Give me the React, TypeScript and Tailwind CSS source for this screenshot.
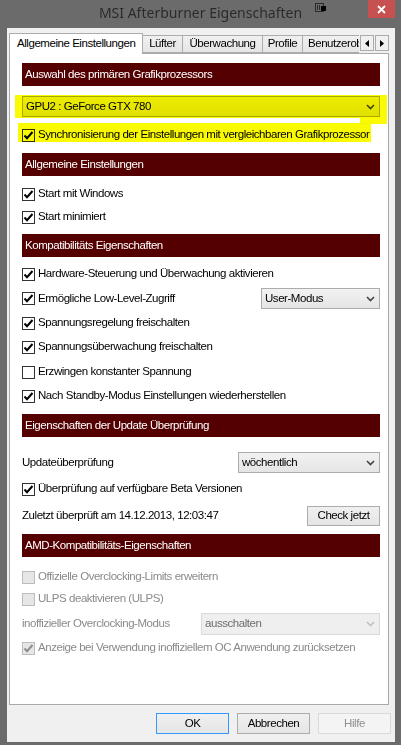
import React from 'react';

const font = "font-['Liberation_Sans',Arial,sans-serif]";

function Check({ checked, disabled }: { checked?: boolean; disabled?: boolean }) {
  return (
    <span
      className={`w-[13px] h-[13px] shrink-0 border flex items-center justify-center ${
        disabled ? 'border-[#bcbcbc] bg-[#e6e6e6]' : 'border-[#333333] bg-white'
      }`}
    >
      {checked && (
        <svg width="11" height="11" viewBox="0 0 11 11">
          <path
            d="M1.5 5.5 L4 8.2 L9.5 2"
            fill="none"
            stroke={disabled ? '#8d8d8d' : '#000'}
            strokeWidth="2"
          />
        </svg>
      )}
    </span>
  );
}

function CheckRow({
  label,
  checked,
  disabled,
  className,
  children,
}: {
  label: string;
  checked?: boolean;
  disabled?: boolean;
  className: string;
  children?: React.ReactNode;
}) {
  return (
    <div className={`flex items-center ${className}`}>
      <Check checked={checked} disabled={disabled} />
      <span className={`ml-[3px] whitespace-nowrap ${disabled ? 'text-[#8a8a8a]' : 'text-black'}`}>{label}</span>
      {children}
    </div>
  );
}

function Chevron({ color = '#444' }: { color?: string }) {
  return (
    <svg width="9" height="6" viewBox="0 0 9 6">
      <path d="M1 1 L4.5 4.5 L8 1" fill="none" stroke={color} strokeWidth="1.6" />
    </svg>
  );
}

function Combo({ text, className, disabled }: { text: string; className: string; disabled?: boolean }) {
  return (
    <div
      className={`flex items-center justify-between border pl-[3px] pr-[4px] ${
        disabled
          ? 'border-[#d9d9d9] bg-[#efefef] text-[#6d6d6d]'
          : 'border-[#acacac] bg-gradient-to-b from-[#f2f2f2] to-[#e5e5e5] text-black'
      } ${className}`}
    >
      <span className="whitespace-nowrap">{text}</span>
      <Chevron color={disabled ? '#c2c2c2' : '#444'} />
    </div>
  );
}

function Header({ title, className }: { title: string; className: string }) {
  return (
    <div className={`h-[23px] bg-[#540000] text-white flex items-center pl-[3px] whitespace-nowrap ${className}`}>
      {title}
    </div>
  );
}

function Button({ label, variant }: { label: string; variant: 'default' | 'normal' | 'disabled' }) {
  const styles = {
    default: 'border-[#3399ff] bg-gradient-to-b from-[#f0f0f0] to-[#e5e5e5] text-black',
    normal: 'border-[#acacac] bg-gradient-to-b from-[#f0f0f0] to-[#e5e5e5] text-black',
    disabled: 'border-[#d9d9d9] bg-[#f4f4f4] text-[#8f8f8f]',
  };
  return (
    <div className={`w-[73px] h-[21px] border flex items-center justify-center ${styles[variant]}`}>{label}</div>
  );
}

export default function App() {
  return (
    <div
      className={`relative w-[401px] h-[745px] bg-[#6b6b6b] flex flex-col overflow-hidden text-[11.5px] tracking-[-0.45px] ${font}`}
    >
      {/* title bar */}
      <div className="h-[28px] shrink-0 grid grid-cols-[1fr_auto_1fr]">
        <div />
        <div className="mt-[3px] leading-[20px] text-[14px] tracking-normal text-[#2b2b2b] font-['Noto_Sans','Liberation_Sans',sans-serif]">
          MSI Afterburner Eigenschaften
        </div>
        <div className="flex justify-end items-start pr-[6px]">
          <svg width="11" height="10" viewBox="0 0 11 10" className="mt-[3px] mr-[42px]">
            <rect x="0.5" y="0.5" width="8" height="8" fill="none" stroke="#2b2b2b" />
            <path d="M2.5 2 V7 M4.5 2 V7" stroke="#2b2b2b" />
            <rect x="6" y="3" width="5" height="5" fill="#000" />
          </svg>
          <div className="w-[27px] h-[18px] bg-[#c75050] flex items-center justify-center">
            <svg width="9" height="9" viewBox="0 0 9 9">
              <path d="M1 1 L8 8 M8 1 L1 8" stroke="#fff" strokeWidth="1.8" />
            </svg>
          </div>
        </div>
      </div>

      {/* dialog body */}
      <div className="flex-1 ml-[7px] mr-[6px] mb-[3px] bg-[#f0f0f0] flex flex-col pl-[2px] pr-[4px]">
        {/* tabs */}
        <div className="mt-[5px] h-[21px] w-[380px] flex items-start relative z-10 -mb-px whitespace-nowrap">
          <div className="w-[134px] h-[21px] bg-white border border-b-0 border-[#acacac] pl-[7px] flex items-center">
            Allgemeine Einstellungen
          </div>
          <div className="flex items-start w-[216px] overflow-hidden">
            <div className="-ml-px shrink-0 w-[41px] h-[18px] mt-[2px] border border-[#acacac] bg-gradient-to-b from-[#f0f0f0] to-[#e5e5e5] flex items-center justify-center">
              Lüfter
            </div>
            <div className="-ml-px shrink-0 w-[81px] h-[18px] mt-[2px] border border-[#acacac] bg-gradient-to-b from-[#f0f0f0] to-[#e5e5e5] flex items-center justify-center">
              Überwachung
            </div>
            <div className="-ml-px shrink-0 w-[41px] h-[18px] mt-[2px] border border-[#acacac] bg-gradient-to-b from-[#f0f0f0] to-[#e5e5e5] flex items-center justify-center">
              Profile
            </div>
            <div className="-ml-px shrink-0 w-[110px] h-[18px] mt-[2px] border border-[#acacac] bg-gradient-to-b from-[#f0f0f0] to-[#e5e5e5] flex items-center pl-[5px]">
              Benutzeroberfläche
            </div>
          </div>
          <div className="flex mt-[2px] ml-px">
            <div className="w-[14px] h-[16px] border border-[#acacac] bg-[#f0f0f0] flex items-center justify-center">
              <svg width="4" height="7" viewBox="0 0 4 7">
                <path d="M4 0 L0 3.5 L4 7 Z" fill="#000" />
              </svg>
            </div>
            <div className="w-[14px] h-[16px] border border-[#acacac] bg-[#f0f0f0] flex items-center justify-center ml-px">
              <svg width="4" height="7" viewBox="0 0 4 7">
                <path d="M0 0 L4 3.5 L0 7 Z" fill="#000" />
              </svg>
            </div>
          </div>
        </div>

        {/* tab panel */}
        <div className="w-[380px] h-[652px] shrink-0 bg-white border border-[#a9a9a9] flex flex-col pl-[12px] pr-[8px]">
          <Header title="Auswahl des primären Grafikprozessors" className="mt-[9px]" />
          <Combo text="GPU2 : GeForce GTX 780" className="mt-[10px] h-[21px]" />
          <CheckRow label="Synchronisierung der Einstellungen mit vergleichbaren Grafikprozessor" checked className="mt-[8px] h-[20px]" />

          <Header title="Allgemeine Einstellungen" className="mt-[8px]" />
          <CheckRow label="Start mit Windows" checked className="mt-[8px] h-[20px]" />
          <CheckRow label="Start minimiert" checked className="mt-[3px] h-[20px]" />

          <Header title="Kompatibilitäts Eigenschaften" className="mt-[7px]" />
          <CheckRow label="Hardware-Steuerung und Überwachung aktivieren" checked className="mt-[7px] h-[20px]" />
          <CheckRow label="Ermögliche Low-Level-Zugriff" checked className="mt-[4px] h-[21px]">
            <Combo text="User-Modus" className="ml-auto w-[119px] h-[21px]" />
          </CheckRow>
          <CheckRow label="Spannungsregelung freischalten" checked className="mt-[4px] h-[20px]" />
          <CheckRow label="Spannungsüberwachung freischalten" checked className="mt-[4px] h-[20px]" />
          <CheckRow label="Erzwingen konstanter Spannung" className="mt-[5px] h-[20px]" />
          <CheckRow label="Nach Standby-Modus Einstellungen wiederherstellen" checked className="mt-[4px] h-[20px]" />

          <Header title="Eigenschaften der Update Überprüfung" className="mt-[8px]" />
          <div className="mt-[15px] h-[21px] flex items-center">
            <span>Updateüberprüfung</span>
            <Combo text="wöchentlich" className="ml-auto w-[142px] h-[21px]" />
          </div>
          <CheckRow label="Überprüfung auf verfügbare Beta Versionen" checked className="mt-[6px] h-[20px]" />
          <div className="mt-[6px] h-[21px] flex items-center">
            <span className="whitespace-nowrap">Zuletzt überprüft am 14.12.2013, 12:03:47</span>
            <div className="ml-auto w-[73px] h-[20px] border border-[#acacac] bg-gradient-to-b from-[#f0f0f0] to-[#e5e5e5] flex items-center justify-center">
              Check jetzt
            </div>
          </div>

          <Header title="AMD-Kompatibilitäts-Eigenschaften" className="mt-[8px]" />
          <CheckRow label="Offizielle Overclocking-Limits erweitern" disabled className="mt-[10px] h-[20px]" />
          <CheckRow label="ULPS deaktivieren (ULPS)" disabled className="mt-[2px] h-[20px]" />
          <div className="mt-[4px] h-[22px] flex items-center">
            <span className="text-[#8a8a8a] whitespace-nowrap">inoffizieller Overclocking-Modus</span>
            <Combo text="ausschalten" disabled className="ml-auto w-[179px] h-[22px]" />
          </div>
          <CheckRow label="Anzeige bei Verwendung inoffiziellem OC Anwendung zurücksetzen" checked disabled className="mt-[3px] h-[20px]" />
        </div>

        {/* dialog buttons */}
        <div className="mt-[8px] flex justify-end gap-[8px]">
          <Button label="OK" variant="default" />
          <Button label="Abbrechen" variant="normal" />
          <Button label="Hilfe" variant="disabled" />
        </div>
      </div>

      {/* yellow marker highlight over the GPU selection */}
      <div className="absolute left-[15px] top-[95px] w-[372px] h-[23px] bg-[#fafa00] mix-blend-multiply pointer-events-none" />
      <div className="absolute left-[360px] top-[118px] w-[27px] h-[6px] bg-[#fafa00] mix-blend-multiply pointer-events-none" />
      <div className="absolute left-[18px] top-[123px] w-[353px] h-[19px] bg-[#fafa00] mix-blend-multiply pointer-events-none" />
    </div>
  );
}
